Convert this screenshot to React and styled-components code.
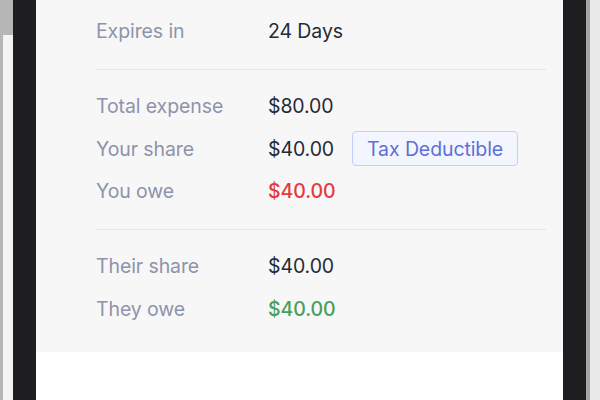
import styled, { createGlobalStyle } from "styled-components";

const GlobalStyle = createGlobalStyle`
  html, body {
    margin: 0;
    padding: 0;
    background: #b6b6b6;
  }
  body {
    font-family: Inter, "Noto Sans", "Liberation Sans", sans-serif;
  }
`;

const Page = styled.div`
  width: 600px;
  height: 400px;
  display: flex;
  overflow: hidden;
  background: #b6b6b6;
`;

const LeftEdge = styled.div`
  width: 13px;
  display: flex;
  flex-direction: column;

  &::after {
    content: "";
    flex: 1;
    margin-top: 35px;
    margin-left: 3px;
    background: #f4f4f4;
  }
`;

const RightEdge = styled.div`
  width: 14px;
  background: #e9e9e9;
  border-left: 4px solid #a6a6a6;
  box-sizing: border-box;
`;

const Phone = styled.div`
  width: 573px;
  background: #1e1e20;
  padding: 0 23px;
  box-sizing: border-box;
`;

const Screen = styled.div`
  height: 100%;
  background: #ffffff;
  overflow: hidden;
`;

const Panel = styled.div`
  margin-top: -5px;
  background: #f7f7f8;
  padding: 0 17px 0 60px;
`;

const Section = styled.div`
  padding: 15px 0 ${(p) => (p.$last ? "22px" : "16.5px")};
  border-bottom: ${(p) => (p.$last ? "none" : "1px solid #e6e6e8")};
`;

const Row = styled.div`
  height: 42.5px;
  display: flex;
  align-items: center;
  font-size: 19.5px;
  letter-spacing: -0.1px;
`;

const Label = styled.div`
  width: 172px;
  color: #8d93aa;
`;

const Value = styled.div`
  color: ${(p) => p.$color || "#262b35"};
  font-weight: ${(p) => (p.$color ? 500 : 400)};
`;

const Badge = styled.div`
  margin-left: 18px;
  height: 35px;
  box-sizing: border-box;
  padding: 0 14px;
  display: flex;
  align-items: center;
  border: 1px solid #c3cffb;
  border-radius: 4px;
  background: #f3f6ff;
  color: #5c70d6;
  font-size: 19.5px;
`;

const RED = "#e53a3a";
const GREEN = "#4a9e5a";

export default function App() {
  return (
    <>
      <GlobalStyle />
      <Page>
        <LeftEdge />
        <Phone>
          <Screen>
            <Panel>
              <Section>
                <Row>
                  <Label>Expires in</Label>
                  <Value>24 Days</Value>
                </Row>
              </Section>
              <Section>
                <Row>
                  <Label>Total expense</Label>
                  <Value>$80.00</Value>
                </Row>
                <Row>
                  <Label>Your share</Label>
                  <Value>$40.00</Value>
                  <Badge>Tax Deductible</Badge>
                </Row>
                <Row>
                  <Label>You owe</Label>
                  <Value $color={RED}>$40.00</Value>
                </Row>
              </Section>
              <Section $last>
                <Row>
                  <Label>Their share</Label>
                  <Value>$40.00</Value>
                </Row>
                <Row>
                  <Label>They owe</Label>
                  <Value $color={GREEN}>$40.00</Value>
                </Row>
              </Section>
            </Panel>
          </Screen>
        </Phone>
        <RightEdge />
      </Page>
    </>
  );
}
